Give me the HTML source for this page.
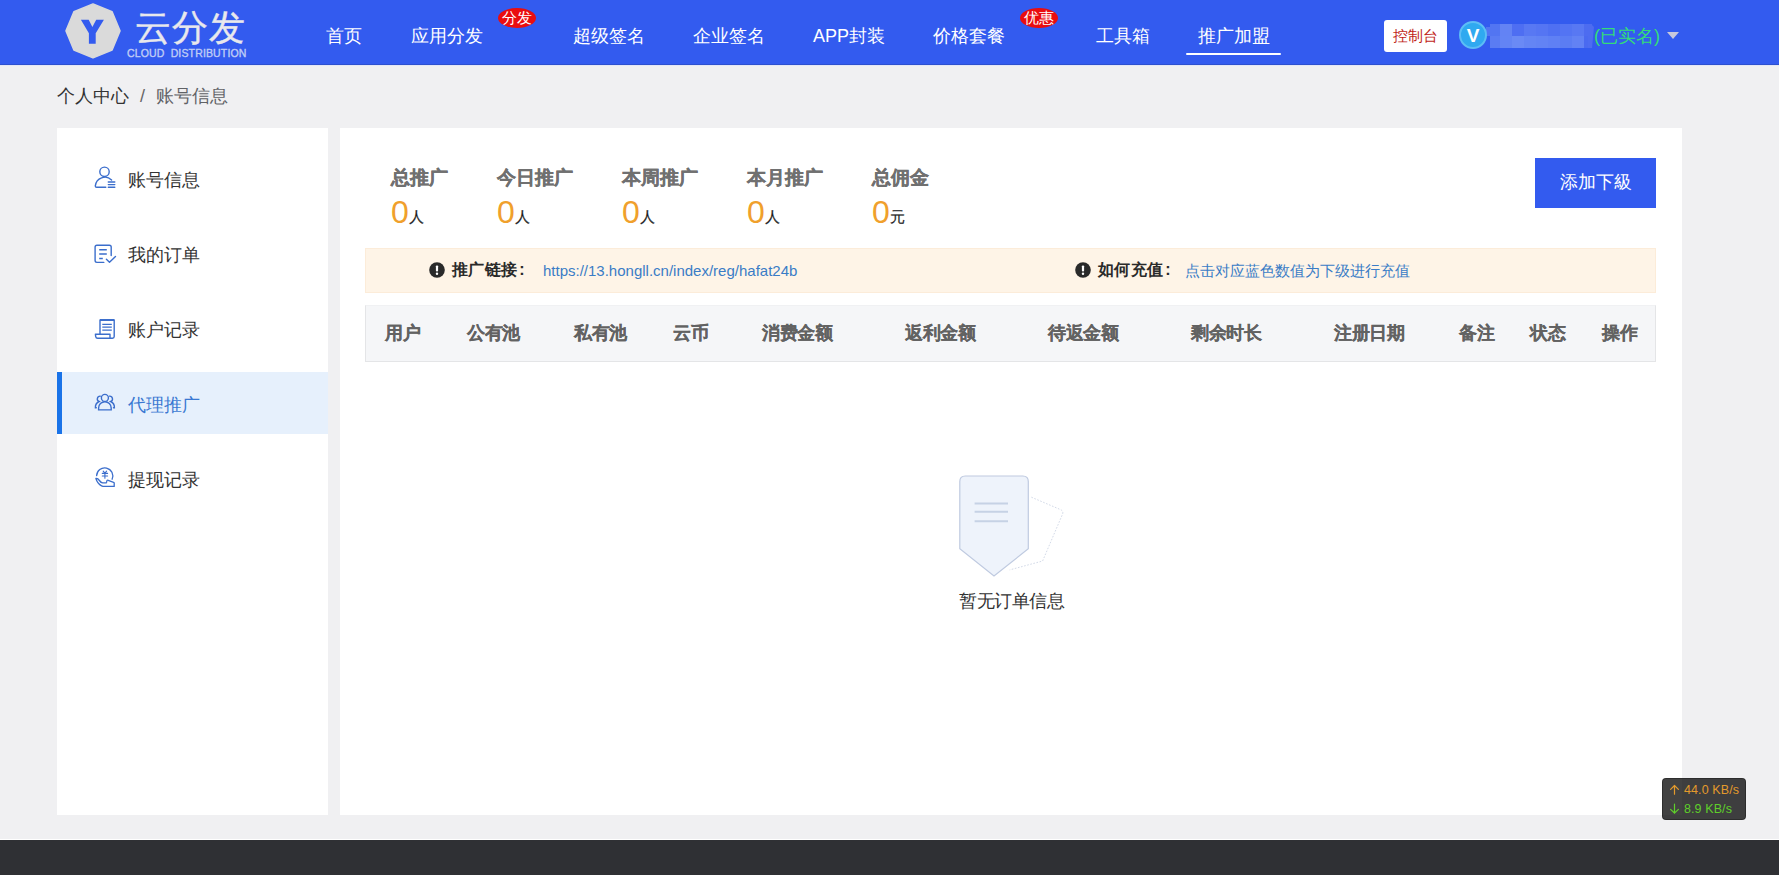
<!DOCTYPE html>
<html><head><meta charset="utf-8">
<style>
*{margin:0;padding:0;box-sizing:border-box}
html,body{width:1779px;height:875px;overflow:hidden}
body{background:#f0f0f2;font-family:"Liberation Sans",sans-serif;color:#333;position:relative}
.abs{position:absolute;white-space:nowrap}
#hdr{position:absolute;left:0;top:0;width:1779px;height:65px;background:#335bef;border-bottom:1px solid #2d50cf;box-shadow:0 1px 0 #e3e6f6}
.nav{position:absolute;top:25px;font-size:18px;line-height:22px;color:#fff}
.badge{position:absolute;top:8px;width:38px;height:20px;border-radius:50%;background:#ea0d0f;color:#fff;font-size:15px;line-height:19px;text-align:center}
#side{position:absolute;left:57px;top:128px;width:271px;height:687px;background:#fff}
#main{position:absolute;left:340px;top:128px;width:1342px;height:687px;background:#fff}
.si{position:absolute;left:0;width:271px;height:62px}
.si .t{position:absolute;left:71px;top:21px;font-size:18px;line-height:22px;color:#333}
.si svg{position:absolute;left:37px;top:19px}
.si.act{background:#e6f0fc}
.si.act:before{content:"";position:absolute;left:0;top:0;width:5px;height:62px;background:#1a73e8}
.si.act .t{color:#3a78d2;top:22px}
.st{position:absolute;top:39px}
.st .l{font-size:19px;font-weight:bold;color:#707070;line-height:22px;-webkit-text-stroke:0.3px #707070}
.st .v{font-size:32px;color:#f0a02c;line-height:36px;margin-top:5px;letter-spacing:-1px}
.st .v span{font-size:15px;color:#1e1e1e;-webkit-text-stroke:0.2px #1e1e1e;margin-left:1px;position:relative;top:-1px}
.th{position:absolute;top:17px;font-size:18px;font-weight:bold;color:#626262;line-height:22px;letter-spacing:-0.5px;-webkit-text-stroke:0.15px #626262}
</style></head><body>
<div id="hdr">
  <svg class="abs" style="left:64px;top:2px" width="60" height="60" viewBox="0 0 60 60">
    <polygon points="29,1.9 48.1,9.8 56,28.9 48.1,48 29,55.9 9.9,48 2,28.9 9.9,9.8" fill="#dadada" stroke="#dadada" stroke-width="1.5" stroke-linejoin="round"/>
    <polygon points="16.9,17.7 24.7,17.7 28.4,25 32.2,17.7 39.9,17.7 31.7,31.2 31.7,41.8 24.9,41.8 24.9,31.2" fill="#335bef"/>
  </svg>
  <div class="abs" style="left:135px;top:8px;font-size:36px;line-height:40px;letter-spacing:1px;color:#e8e8ec;-webkit-text-stroke:0.4px #e8e8ec">云分发</div>
  <div class="abs" style="left:127px;top:47px;font-size:10.5px;line-height:13px;color:#c0cdf6;letter-spacing:0.15px;-webkit-text-stroke:0.35px #c0cdf6">CLOUD&nbsp; DISTRIBUTION</div>

  <div class="nav" style="left:326px">首页</div>
  <div class="nav" style="left:411px">应用分发</div>
  <div class="badge" style="left:498px">分发</div>
  <div class="nav" style="left:573px">超级签名</div>
  <div class="nav" style="left:693px">企业签名</div>
  <div class="nav" style="left:813px">APP封装</div>
  <div class="nav" style="left:933px">价格套餐</div>
  <div class="badge" style="left:1020px">优惠</div>
  <div class="nav" style="left:1096px">工具箱</div>
  <div class="nav" style="left:1198px">推广加盟</div>
  <div class="abs" style="left:1186px;top:53px;width:95px;height:2px;border-radius:1px;background:#fff"></div>

  <div class="abs" style="left:1384px;top:20px;width:63px;height:32px;background:#fff;border-radius:3px;color:#bf1f1a;font-size:15px;line-height:32px;text-align:center">控制台</div>
  <div class="abs" style="left:1490px;top:24px;width:10px;height:12px;background:#5275f2"></div><div class="abs" style="left:1490px;top:36px;width:10px;height:12px;background:#5a7cf3"></div><div class="abs" style="left:1500px;top:24px;width:12px;height:12px;background:#6383f4"></div><div class="abs" style="left:1500px;top:36px;width:12px;height:12px;background:#6384f4"></div><div class="abs" style="left:1512px;top:24px;width:12px;height:12px;background:#4e6ef2"></div><div class="abs" style="left:1512px;top:36px;width:12px;height:12px;background:#6a8af5"></div><div class="abs" style="left:1524px;top:24px;width:12px;height:12px;background:#5878f3"></div><div class="abs" style="left:1524px;top:36px;width:12px;height:12px;background:#6485f4"></div><div class="abs" style="left:1536px;top:24px;width:12px;height:12px;background:#5575f3"></div><div class="abs" style="left:1536px;top:36px;width:12px;height:12px;background:#6283f4"></div><div class="abs" style="left:1548px;top:24px;width:12px;height:12px;background:#4f70f2"></div><div class="abs" style="left:1548px;top:36px;width:12px;height:12px;background:#5f80f4"></div><div class="abs" style="left:1560px;top:24px;width:12px;height:12px;background:#5374f3"></div><div class="abs" style="left:1560px;top:36px;width:12px;height:12px;background:#5b7df3"></div><div class="abs" style="left:1572px;top:24px;width:12px;height:12px;background:#5878f3"></div><div class="abs" style="left:1572px;top:36px;width:12px;height:12px;background:#6282f4"></div><div class="abs" style="left:1584px;top:24px;width:8px;height:12px;background:#4d6cf0"></div><div class="abs" style="left:1584px;top:36px;width:8px;height:12px;background:#4a6af0"></div>
  <div class="abs" style="left:1486px;top:27px;width:4px;height:9px;background:#5275f2"></div>
  <svg class="abs" style="left:1588px;top:24px" width="10" height="24"><polygon points="0,0 3,0 6,3 4,24 0,24" fill="#4d6cf0"/></svg>
  <div class="abs" style="left:1459px;top:21px;width:28px;height:28px;border-radius:50%;background:#2fa9f0;border:2px solid #5cbdf5;color:#fff;font-weight:bold;font-size:19px;line-height:26px;text-align:center">V</div>
  <div class="abs" style="left:1594px;top:25px;font-size:18px;line-height:22px;color:#34dd78">(已实名)</div>
  <div class="abs" style="left:1667px;top:32px;width:0;height:0;border-left:6.5px solid transparent;border-right:6.5px solid transparent;border-top:7px solid #c8c9dc"></div>
</div>

<div class="abs" style="left:57px;top:85px;font-size:18px;line-height:22px;color:#333">个人中心</div>
<div class="abs" style="left:140px;top:85px;font-size:18px;line-height:22px;color:#666">/</div>
<div class="abs" style="left:156px;top:85px;font-size:18px;line-height:22px;color:#606266">账号信息</div>

<div id="side">
  <div class="si" style="top:20px"><div class="t">账号信息</div></div>
  <div class="si" style="top:95px"><div class="t">我的订单</div></div>
  <div class="si" style="top:170px"><div class="t">账户记录</div></div>
  <div class="si act" style="top:244px"><div class="t">代理推广</div></div>
  <div class="si" style="top:320px"><div class="t">提现记录</div></div>
</div>
<svg class="abs" style="left:88px;top:160px" width="40" height="40" viewBox="0 0 40 40" fill="none" stroke="#3b6ecc" stroke-width="1.4" stroke-linecap="round">
  <circle cx="16.5" cy="11.8" r="4.7"/>
  <path d="M23.6,19.9 A9.7,9.7 0 0 0 7.3,25.9 Q7.3,27.2 8.6,27.2 L17.8,27.2"/>
  <path d="M20.3,22 H26.8 M20.3,24.6 H26.8 M20.3,27.2 H26.8"/>
</svg>
<svg class="abs" style="left:88px;top:235px" width="40" height="40" viewBox="0 0 40 40" fill="none" stroke="#3b6ecc" stroke-width="1.4" stroke-linecap="round" stroke-linejoin="round">
  <path d="M23.2,20.5 V12 Q23.2,10.2 21.4,10.2 H8.9 Q7.1,10.2 7.1,12 V25.6 Q7.1,27.4 8.9,27.4 H15.8"/>
  <path d="M11.2,14.7 H18.8 M11.2,19 H18.8 M11.2,23.5 H14.8" stroke-linecap="butt"/>
  <path d="M18.4,24.3 L21.5,27.3 L27.5,21.5"/>
</svg>
<svg class="abs" style="left:88px;top:310px" width="40" height="40" viewBox="0 0 40 40" fill="none" stroke="#3b6ecc" stroke-width="1.4" stroke-linejoin="round">
  <path d="M12,24.2 V10 H26.2 V26.6 Q26.2,28.3 24.5,28.3 H9.6 Q8,28.3 7.7,26.6 L7.4,24.2 H22 V28.2" />
  <path d="M12,10 H26.2" stroke-width="1.9"/>
  <path d="M14.3,14.4 H23.8 M14.3,17.1 H23.8 M14.3,20.1 H23.8"/>
</svg>
<svg class="abs" style="left:88px;top:383px" width="40" height="40" viewBox="0 0 40 40" fill="none" stroke="#3b6ecc" stroke-width="1.4" stroke-linecap="round">
  <circle cx="16.9" cy="14.9" r="3.5"/>
  <path d="M10.6,26.9 V25 A6.3,6.3 0 0 1 23.2,25 V26.9 Z"/>
  <path d="M12.3,13.1 A2.8,2.8 0 0 0 11.1,18.5 A6.4,6.4 0 0 0 7.4,24.7 H8.3"/>
  <path d="M21.5,13.1 A2.8,2.8 0 0 1 22.7,18.5 A6.4,6.4 0 0 1 26.4,24.7 H25.5"/>
</svg>
<svg class="abs" style="left:88px;top:460px" width="40" height="40" viewBox="0 0 40 40" fill="none" stroke="#3b6ecc" stroke-width="1.3" stroke-linecap="round" stroke-linejoin="round">
  <path d="M8.6,15.6 A8.1,8.1 0 1 1 24.1,19.2"/>
  <path d="M15.2,11.2 L16.9,13.2 L18.6,11.2 M14.3,13.4 H19.6 M14.3,16 H19.6 M16.9,13.2 V18.3" stroke-width="1.1"/>
  <path d="M7.9,18.5 Q9.5,23.8 13.6,25.8 Q14.8,26.4 16.5,26.4 H26.2 V23 Q26.2,22.6 25.6,22.4 L20.2,20.3 Q19,19.9 18.8,21 L18.6,22.2 Q18.4,22.9 17.4,22.9 H14.6 Q13,22.7 11.4,20.5 Q9.8,18.2 7.9,18.5 Z"/>
</svg>
<div id="main">
  <div class="st" style="left:51px"><div class="l">总推广</div><div class="v">0<span>人</span></div></div>
  <div class="st" style="left:157px"><div class="l">今日推广</div><div class="v">0<span>人</span></div></div>
  <div class="st" style="left:282px"><div class="l">本周推广</div><div class="v">0<span>人</span></div></div>
  <div class="st" style="left:407px"><div class="l">本月推广</div><div class="v">0<span>人</span></div></div>
  <div class="st" style="left:532px"><div class="l">总佣金</div><div class="v">0<span>元</span></div></div>

  <div class="abs" style="left:1195px;top:30px;width:121px;height:50px;background:#335bef;color:#fff;font-size:18px;line-height:48px;text-align:center">添加下級</div>

  <div class="abs" style="left:25px;top:120px;width:1291px;height:45px;background:#fef4e7;border:1px solid #fcecd9"></div>
  <svg class="abs" style="left:89px;top:134px" width="16" height="16" viewBox="0 0 16 16"><circle cx="8" cy="8" r="7.8" fill="#2a2a2a"/><rect x="6.9" y="3.4" width="2.2" height="6" rx="0.9" fill="#fff"/><circle cx="8" cy="11.7" r="1.2" fill="#fff"/></svg>
  <div class="abs" style="left:112px;top:132px;font-size:16px;line-height:20px;font-weight:bold;color:#2a2a2a;letter-spacing:0.3px">推广链接<span style="margin-left:2px">:</span></div>
  <div class="abs" style="left:203px;top:133px;font-size:15px;line-height:20px;color:#3a7cc6">https://13.hongll.cn/index/reg/hafat24b</div>
  <svg class="abs" style="left:735px;top:134px" width="16" height="16" viewBox="0 0 16 16"><circle cx="8" cy="8" r="7.8" fill="#2a2a2a"/><rect x="6.9" y="3.4" width="2.2" height="6" rx="0.9" fill="#fff"/><circle cx="8" cy="11.7" r="1.2" fill="#fff"/></svg>
  <div class="abs" style="left:758px;top:132px;font-size:16px;line-height:20px;font-weight:bold;color:#2a2a2a;letter-spacing:0.3px">如何充值<span style="margin-left:2px">:</span></div>
  <div class="abs" style="left:845px;top:133px;font-size:15px;line-height:20px;color:#3a7cc6">点击对应蓝色数值为下级进行充值</div>

  <div class="abs" style="left:25px;top:177px;width:1291px;height:57px;background:#f5f6f8;border:1px solid #e4e5e7;border-top-color:#f0f1f3"></div>
  <div class="th" style="left:45px;top:194px">用户</div>
  <div class="th" style="left:127px;top:194px">公有池</div>
  <div class="th" style="left:234px;top:194px">私有池</div>
  <div class="th" style="left:333px;top:194px">云币</div>
  <div class="th" style="left:422px;top:194px">消费金额</div>
  <div class="th" style="left:565px;top:194px">返利金额</div>
  <div class="th" style="left:708px;top:194px">待返金额</div>
  <div class="th" style="left:851px;top:194px">剩余时长</div>
  <div class="th" style="left:994px;top:194px">注册日期</div>
  <div class="th" style="left:1119px;top:194px">备注</div>
  <div class="th" style="left:1190px;top:194px">状态</div>
  <div class="th" style="left:1262px;top:194px">操作</div>

  <svg class="abs" style="left:610px;top:340px" width="120" height="110" viewBox="0 0 120 110">
    <path d="M81.4,29.2 L110.5,41.6 Q113.6,43 112.6,46 L92.6,93 L59.7,101.9" fill="none" stroke="#d3dae8" stroke-width="1" stroke-dasharray="1.6 1.6"/>
    <path d="M15.3,8 H72.8 Q78.3,8 78.3,13.5 V80.7 L44,108 L9.8,80.7 V13.5 Q9.8,8 15.3,8 Z" fill="#eef3fb" stroke="#bfcae0" stroke-width="1.2"/>
    <path d="M24.6,35.4 H58 M24.6,43.7 H58 M24.6,53.2 H58" stroke="#c6d2e5" stroke-width="2"/>
  </svg>
  <div class="abs" style="left:619px;top:462px;font-size:18px;line-height:22px;color:#333;letter-spacing:-0.4px">暂无订单信息</div>
</div>

<div class="abs" style="left:0;top:839px;width:1779px;height:1px;background:#fff"></div>
<div class="abs" style="left:0;top:840px;width:1779px;height:35px;background:#2f3034"></div>

<div class="abs" style="left:1662px;top:778px;width:84px;height:42px;background:rgba(0,0,0,.74);border:1px solid rgba(0,0,0,.3);border-radius:4px"></div>
<svg class="abs" style="left:1662px;top:778px" width="84" height="42" fill="none" stroke-width="1.2" stroke-linecap="round" stroke-linejoin="round">
  <path d="M12.5,7.5 V16.2 M8.6,11.4 L12.5,7.5 L16.4,11.4" stroke="#e39a2c"/>
  <path d="M12.5,26.2 V35.2 M8.6,31.3 L12.5,35.2 L16.4,31.3" stroke="#5fcf2a"/>
</svg>
<div class="abs" style="left:1684px;top:783px;font-size:12.5px;line-height:15px;color:#e39a2c;letter-spacing:0.1px">44.0 KB/s</div>
<div class="abs" style="left:1684px;top:802px;font-size:12.5px;line-height:15px;color:#5fcf2a;letter-spacing:0.1px">8.9 KB/s</div>
</body></html>
